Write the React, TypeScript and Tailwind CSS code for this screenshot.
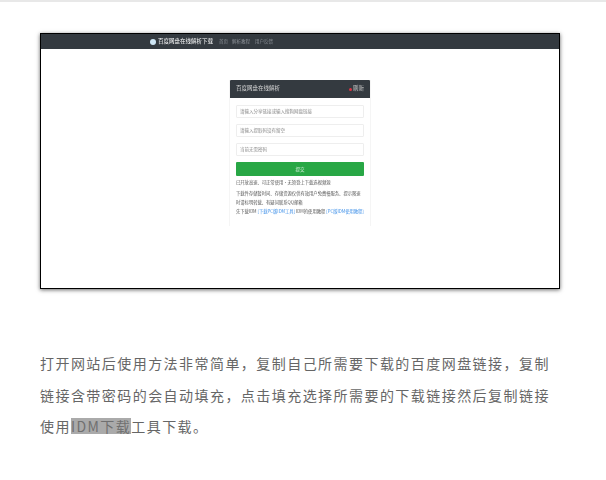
export default function App() {
  const cjk = { fontFamily: '"Noto Sans CJK SC", "Liberation Sans", sans-serif' };
  return (
    <div className="w-[606px] h-[480px] bg-white overflow-hidden border-t-2 border-[#e8e8e8] pt-[31px] px-10" style={cjk}>
      <div className="w-[520px] h-[256px] border border-black bg-white shadow-[0_1px_4px_rgba(0,0,0,0.6)] flex flex-col">
        <div className="h-[15px] bg-[#343a40] flex items-center pl-[109px] blur-[0.5px] shrink-0">
          <span className="w-[6px] h-[6px] rounded-full bg-[#cfe6f5] mr-[2px]" />
          <span className="text-[5.5px] leading-none text-white">百度网盘在线解析下载</span>
          <span className="text-[4.5px] leading-none text-[#8b9096] ml-[6px]">首页</span>
          <span className="text-[4.5px] leading-none text-[#8b9096] ml-[4px]">解析教程</span>
          <span className="text-[4.5px] leading-none text-[#8b9096] ml-[5px]">用户反馈</span>
        </div>
        <div className="flex justify-center pt-[31px] blur-[0.5px]">
          <div className="w-[142px] h-[146px] border-x border-[#f5f5f5] flex flex-col">
            <div className="h-[18px] bg-[#343a40] flex items-center justify-between px-[6px] shrink-0 rounded-t-[1px]">
              <span className="text-[5.5px] leading-none text-[#d8d8d8]">百度网盘在线解析</span>
              <span className="flex items-center gap-[1px] text-[5.5px] leading-none text-[#cccccc]">
                <span className="w-[3px] h-[3px] rounded-full bg-[#dc3545]" />
                刷新
              </span>
            </div>
            <div className="px-[6px] pt-[7px] flex flex-col">
              <div className="h-[13px] border border-[#eeeeee] rounded-[1px] flex items-center px-[3px] text-[4.5px] leading-none text-[#8a8a8a]">请输入分享链接或输入搜狗网盘链接</div>
              <div className="h-[13px] mt-[6px] border border-[#eeeeee] rounded-[1px] flex items-center px-[3px] text-[4.5px] leading-none text-[#8a8a8a]">请输入提取码没有留空</div>
              <div className="h-[13px] mt-[6px] border border-[#eeeeee] rounded-[1px] flex items-center px-[3px] text-[4.5px] leading-none text-[#8a8a8a]">当前无需密码</div>
              <div className="h-[14px] mt-[6px] bg-[#28a745] rounded-[1px] flex items-center justify-center text-[4.5px] leading-none text-[#d8f0de]">提交</div>
              <p className="mt-[2px] text-[4.3px] leading-[9px] text-[#555555] whitespace-nowrap">已开放高速、可正常使用·无须登上下载选视频源</p>
              <p className="mt-[2px] text-[4.3px] leading-[9px] text-[#555555]">下载件存储暂时间、存储资源仅供有效用户免费慢服务、提示限速时请标明转载、有疑问联系QQ邮箱</p>
              <p className="text-[4.3px] leading-[9px] text-[#555555] whitespace-nowrap">先下载IDM <span className="text-[#3b8ee8]">[下载PC版IDM工具]</span> IDM的使用教程 <span className="text-[#3b8ee8]">[PC版IDM使用教程]</span></p>
            </div>
          </div>
        </div>
      </div>
      <p className="mt-[59px] w-[520px] text-[14px] leading-[31.5px] tracking-[1.45px] text-[#666666]">
        打开网站后使用方法非常简单，复制自己所需要下载的百度网盘链接，复制链接含带密码的会自动填充，点击填充选择所需要的下载链接然后复制链接使用<span className="inline-block leading-[16px] bg-[#aaaaaa] text-[#707070]">IDM下载</span>工具下载。
      </p>
    </div>
  );
}
